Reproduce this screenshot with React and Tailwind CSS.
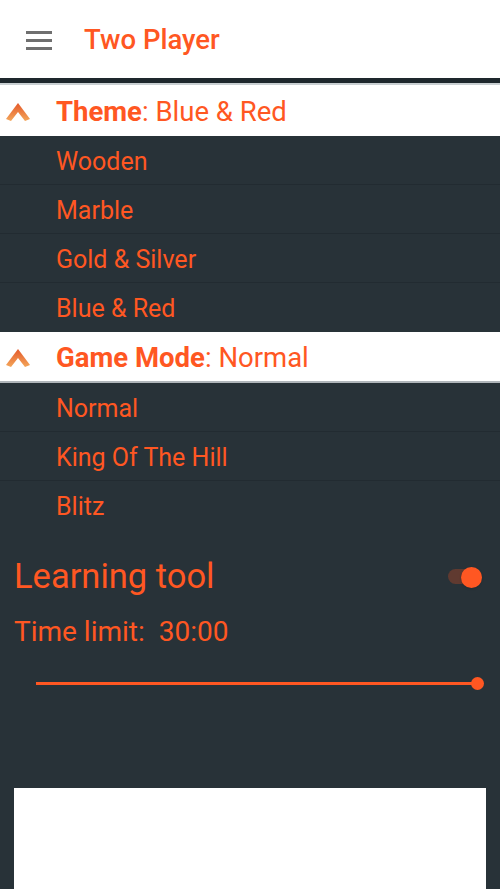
import React, { useState } from "react";

function Caret() {
  return (
    <svg width="28" height="22" viewBox="0 0 28 22" className="ml-[4px]">
      <defs>
        <linearGradient id="cg" x1="0" y1="0" x2="0" y2="1">
          <stop offset="0%" stopColor="#e4582a" />
          <stop offset="100%" stopColor="#f3a65a" />
        </linearGradient>
      </defs>
      <path d="M14 2 L26 18 L21 20 L14 11 L7 20 L2 18 Z" fill="url(#cg)" />
    </svg>
  );
}

function Header({ label, value, bottomLine }) {
  return (
    <div className={`h-[51px] bg-white flex items-center pt-[2px] ${bottomLine ? "border-b-2 border-[#b0b6ba]" : ""}`}>
      <div className="w-[56px] flex items-center">
        <Caret />
      </div>
      <span className="text-[27.5px] text-[#ff5722]">
        <span className="font-bold">{label}</span>: {value}
      </span>
    </div>
  );
}

function Item({ text, last }) {
  return (
    <div className={`h-[49px] flex items-center pl-[56px] pt-[3px] text-[25px] text-[#ff5722] ${last ? "" : "border-b border-[#222b31]"}`}>
      {text}
    </div>
  );
}

export default function App() {
  const [learning, setLearning] = useState(true);
  const themes = ["Wooden", "Marble", "Gold & Silver", "Blue & Red"];
  const modes = ["Normal", "King Of The Hill", "Blitz"];

  return (
    <div className="w-[500px] h-[889px] overflow-hidden bg-[#283238] flex flex-col" style={{ fontFamily: "Roboto, 'Noto Sans', sans-serif" }}>
      <div className="h-[78px] bg-white flex items-center shrink-0 pt-[2px]">
        <div className="w-[84px] pl-[26px]">
          <div className="w-[26px] flex flex-col gap-[5px]">
            <div className="h-[3px] bg-[#6f6f6f]" />
            <div className="h-[3px] bg-[#6f6f6f]" />
            <div className="h-[3px] bg-[#6f6f6f]" />
          </div>
        </div>
        <span className="text-[27.5px] font-medium text-[#ff5722]">Two Player</span>
      </div>
      <div className="h-[5px] bg-[#1e272d] shrink-0" />
      <div className="h-[2px] bg-[#c9cfd2] shrink-0" />

      <Header label="Theme" value="Blue & Red" />
      {themes.map((t, i) => (
        <Item key={t} text={t} last={i === themes.length - 1} />
      ))}
      <Header label="Game Mode" value="Normal" bottomLine />
      {modes.map((m, i) => (
        <Item key={m} text={m} last={i === modes.length - 1} />
      ))}

      <div className="flex items-center justify-between pl-[14px] pr-[18px] mt-[21px]">
        <span className="text-[34.5px] text-[#ff5722]">Learning tool</span>
        <button onClick={() => setLearning(!learning)} className="relative w-[34px] h-[22px] flex items-center">
          <div className="w-[34px] h-[15px] rounded-full bg-[#603a30]" />
          <div className={`absolute top-[1px] w-[21px] h-[21px] rounded-full bg-[#ff5722] shadow ${learning ? "left-[13px]" : "left-0"}`} />
        </button>
      </div>
      <div className="pl-[14px] mt-[8px] text-[28px] text-[#ff5722]">Time limit:&nbsp; 30:00</div>

      <div className="relative ml-[36px] mt-[24px] mr-[22px] h-[14px] flex items-center">
        <div className="w-full h-[3px] bg-[#ff5722]" />
        <div className="absolute right-[-6px] w-[13px] h-[13px] rounded-full bg-[#ff5722]" />
      </div>

      <div className="mt-[97px] mx-[14px] flex-1 bg-white" />
    </div>
  );
}
